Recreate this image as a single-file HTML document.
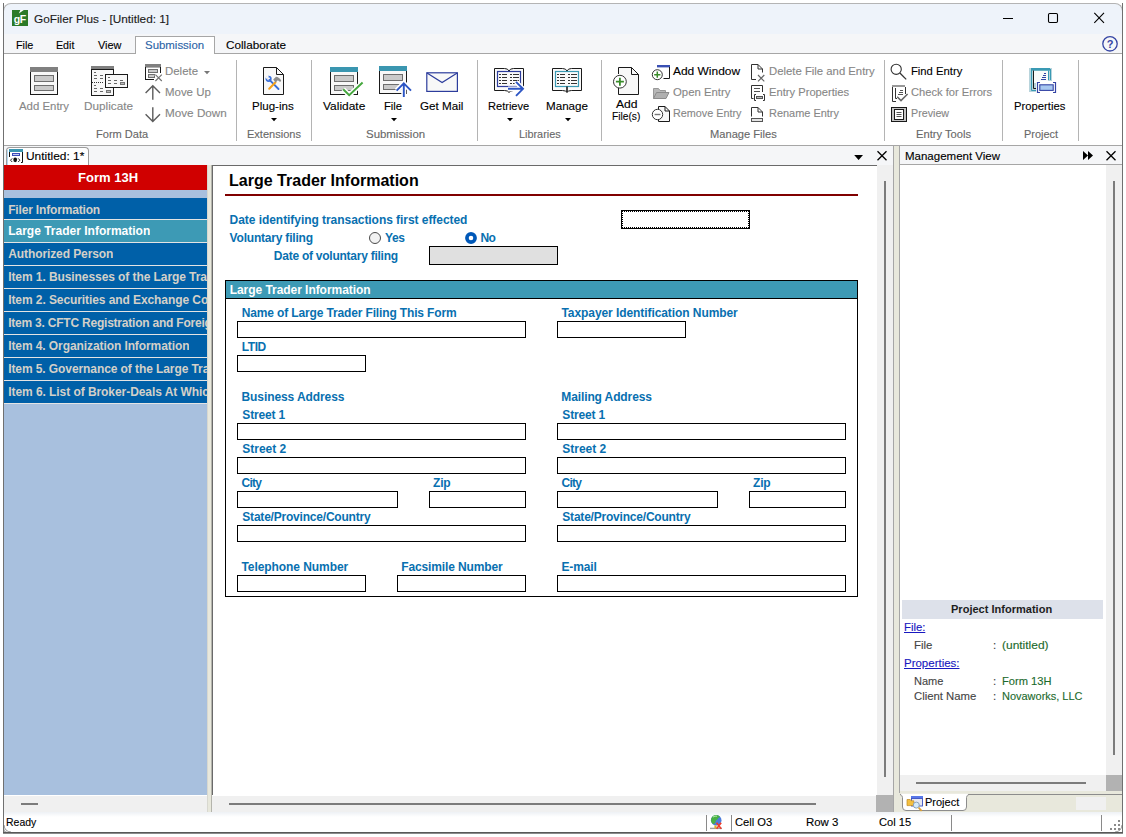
<!DOCTYPE html>
<html lang="en"><head><meta charset="utf-8"><title>GoFiler Plus - [Untitled: 1]</title>
<style>
html,body{margin:0;padding:0;background:#fff;}
body{width:1126px;height:837px;position:relative;overflow:hidden;font-family:"Liberation Sans",sans-serif;font-size:12px;}
body div,body span,body svg{position:absolute;box-sizing:border-box;}
body span{white-space:nowrap;}
</style></head><body>
<div style="left:3px;top:3px;width:1120px;height:31px;background:#eef3fa;border:1px solid #b4b4b4;border-bottom:none;border-radius:8px 8px 0 0;"></div>
<div style="left:4px;top:34px;width:1118px;height:19px;background:#f5f6f8;"></div>
<div style="left:3px;top:3px;width:1px;height:831px;background:#707070;"></div>
<div style="left:1122px;top:3px;width:1px;height:831px;background:#707070;"></div>
<div style="left:3px;top:832px;width:1120px;height:1px;background:#585858;"></div>
<div style="left:3px;top:833px;width:1120px;height:1px;background:#8a8a8a;"></div>
<div style="left:12px;top:10px;width:16px;height:16px;background:#2b7a27;"></div>
<svg style="left:12px;top:10px" width="16" height="16" viewBox="0 0 16 16" ><path d="M8.4,0 L11.8,0 L6.8,3.4 Z" fill="#fff"/></svg>
<span style="left:13.70px;top:13px;font-size:10.5px;line-height:12px;color:#fff;font-weight:bold;letter-spacing:-0.414px;">gF</span>
<span style="left:33.70px;top:13px;font-size:11.5px;line-height:12px;color:#1c1c1c;-webkit-text-stroke:0.12px;transform:scaleX(1.0262);transform-origin:0 0;">GoFiler Plus - [Untitled: 1]</span>
<svg style="left:1000px;top:10px" width="110" height="16" viewBox="0 0 110 16" ><path d="M3,8.5 H13" stroke="#000" stroke-width="1" fill="none"/><rect x="48.5" y="3.5" width="9" height="9" rx="1.2" stroke="#000" stroke-width="1.1" fill="none"/><path d="M94.3,2.8 L104,12.8 M104,2.8 L94.3,12.8" stroke="#000" stroke-width="1.1" fill="none"/></svg>
<div style="left:4px;top:53px;width:1118px;height:1px;background:#a6a6a6;"></div>
<span style="left:15.90px;top:39px;font-size:11.5px;line-height:12px;color:#000;-webkit-text-stroke:0.12px;transform:scaleX(0.9374);transform-origin:0 0;">File</span>
<span style="left:56.00px;top:39px;font-size:11.5px;line-height:12px;color:#000;-webkit-text-stroke:0.12px;transform:scaleX(0.9262);transform-origin:0 0;">Edit</span>
<span style="left:98.20px;top:39px;font-size:11.5px;line-height:12px;color:#000;-webkit-text-stroke:0.12px;transform:scaleX(0.9483);transform-origin:0 0;">View</span>
<div style="left:135px;top:36px;width:80px;height:18px;background:#fff;border:1px solid #a6a6a6;border-bottom:none;"></div>
<span style="left:144.80px;top:39px;font-size:11.5px;line-height:12px;color:#2b63a6;-webkit-text-stroke:0.12px;transform:scaleX(0.9941);transform-origin:0 0;">Submission</span>
<span style="left:225.80px;top:39px;font-size:11.5px;line-height:12px;color:#000;-webkit-text-stroke:0.12px;transform:scaleX(1.0202);transform-origin:0 0;">Collaborate</span>
<svg style="left:1100px;top:34px" width="20" height="20" viewBox="0 0 20 20" ><circle cx="10" cy="9.8" r="7.2" fill="none" stroke="#3444a4" stroke-width="1.3"/></svg>
<span style="left:1106.70px;top:38px;font-size:11px;line-height:12px;color:#3444a4;font-weight:bold;">?</span>
<div style="left:4px;top:145px;width:1118px;height:1px;background:#a6a6a6;"></div>
<div style="left:236px;top:60px;width:1px;height:81px;background:#b4b4b4;"></div>
<div style="left:311px;top:60px;width:1px;height:81px;background:#b4b4b4;"></div>
<div style="left:477px;top:60px;width:1px;height:81px;background:#b4b4b4;"></div>
<div style="left:601px;top:60px;width:1px;height:81px;background:#b4b4b4;"></div>
<div style="left:884px;top:60px;width:1px;height:81px;background:#b4b4b4;"></div>
<div style="left:1002px;top:60px;width:1px;height:81px;background:#b4b4b4;"></div>
<div style="left:1078px;top:60px;width:1px;height:81px;background:#b4b4b4;"></div>
<span style="left:96.20px;top:128px;font-size:11.5px;line-height:12px;color:#686868;-webkit-text-stroke:0.12px;transform:scaleX(0.9614);transform-origin:0 0;">Form Data</span>
<span style="left:247.10px;top:128px;font-size:11.5px;line-height:12px;color:#686868;-webkit-text-stroke:0.12px;transform:scaleX(0.9592);transform-origin:0 0;">Extensions</span>
<span style="left:366.00px;top:128px;font-size:11.5px;line-height:12px;color:#686868;-webkit-text-stroke:0.12px;transform:scaleX(0.9941);transform-origin:0 0;">Submission</span>
<span style="left:519.30px;top:128px;font-size:11.5px;line-height:12px;color:#686868;-webkit-text-stroke:0.12px;transform:scaleX(0.9447);transform-origin:0 0;">Libraries</span>
<span style="left:709.50px;top:128px;font-size:11.5px;line-height:12px;color:#686868;-webkit-text-stroke:0.12px;transform:scaleX(0.9670);transform-origin:0 0;">Manage Files</span>
<span style="left:915.90px;top:128px;font-size:11.5px;line-height:12px;color:#686868;-webkit-text-stroke:0.12px;transform:scaleX(0.9714);transform-origin:0 0;">Entry Tools</span>
<span style="left:1024.10px;top:128px;font-size:11.5px;line-height:12px;color:#686868;-webkit-text-stroke:0.12px;transform:scaleX(0.9482);transform-origin:0 0;">Project</span>
<span style="left:18.70px;top:100px;font-size:11.5px;line-height:12px;color:#878787;-webkit-text-stroke:0.12px;transform:scaleX(0.9912);transform-origin:0 0;">Add Entry</span>
<span style="left:84.10px;top:100px;font-size:11.5px;line-height:12px;color:#878787;-webkit-text-stroke:0.12px;transform:scaleX(1.0221);transform-origin:0 0;">Duplicate</span>
<span style="left:251.90px;top:100px;font-size:11.5px;line-height:12px;color:#000;-webkit-text-stroke:0.12px;transform:scaleX(1.0025);transform-origin:0 0;">Plug-ins</span>
<span style="left:322.50px;top:100px;font-size:11.5px;line-height:12px;color:#000;-webkit-text-stroke:0.12px;transform:scaleX(1.0395);transform-origin:0 0;">Validate</span>
<span style="left:384.00px;top:100px;font-size:11.5px;line-height:12px;color:#000;-webkit-text-stroke:0.12px;transform:scaleX(0.9760);transform-origin:0 0;">File</span>
<span style="left:420.10px;top:100px;font-size:11.5px;line-height:12px;color:#000;-webkit-text-stroke:0.12px;transform:scaleX(1.0151);transform-origin:0 0;">Get Mail</span>
<span style="left:487.90px;top:100px;font-size:11.5px;line-height:12px;color:#000;-webkit-text-stroke:0.12px;transform:scaleX(0.9617);transform-origin:0 0;">Retrieve</span>
<span style="left:546.00px;top:100px;font-size:11.5px;line-height:12px;color:#000;-webkit-text-stroke:0.12px;transform:scaleX(1.0106);transform-origin:0 0;">Manage</span>
<span style="left:1014.10px;top:100px;font-size:11.5px;line-height:12px;color:#000;-webkit-text-stroke:0.12px;transform:scaleX(0.9779);transform-origin:0 0;">Properties</span>
<span style="left:615.50px;top:98px;font-size:11.5px;line-height:12px;color:#000;-webkit-text-stroke:0.12px;transform:scaleX(1.0565);transform-origin:0 0;">Add</span>
<span style="left:611.90px;top:110px;font-size:11.5px;line-height:12px;color:#000;-webkit-text-stroke:0.12px;transform:scaleX(0.8876);transform-origin:0 0;">File(s)</span>
<span style="left:165.20px;top:65px;font-size:11.5px;line-height:12px;color:#878787;-webkit-text-stroke:0.12px;transform:scaleX(0.9925);transform-origin:0 0;">Delete</span>
<span style="left:165.20px;top:86px;font-size:11.5px;line-height:12px;color:#878787;-webkit-text-stroke:0.12px;transform:scaleX(0.9952);transform-origin:0 0;">Move Up</span>
<span style="left:165.20px;top:107px;font-size:11.5px;line-height:12px;color:#878787;-webkit-text-stroke:0.12px;transform:scaleX(1.0179);transform-origin:0 0;">Move Down</span>
<span style="left:672.90px;top:65px;font-size:11.5px;line-height:12px;color:#000;-webkit-text-stroke:0.12px;transform:scaleX(1.0390);transform-origin:0 0;">Add Window</span>
<span style="left:673.10px;top:86px;font-size:11.5px;line-height:12px;color:#878787;-webkit-text-stroke:0.12px;transform:scaleX(0.9877);transform-origin:0 0;">Open Entry</span>
<span style="left:673.10px;top:107px;font-size:11.5px;line-height:12px;color:#878787;-webkit-text-stroke:0.12px;transform:scaleX(0.9397);transform-origin:0 0;">Remove Entry</span>
<span style="left:769.00px;top:65px;font-size:11.5px;line-height:12px;color:#878787;-webkit-text-stroke:0.12px;transform:scaleX(0.9848);transform-origin:0 0;">Delete File and Entry</span>
<span style="left:769.00px;top:86px;font-size:11.5px;line-height:12px;color:#878787;-webkit-text-stroke:0.12px;transform:scaleX(0.9722);transform-origin:0 0;">Entry Properties</span>
<span style="left:769.00px;top:107px;font-size:11.5px;line-height:12px;color:#878787;-webkit-text-stroke:0.12px;transform:scaleX(0.9518);transform-origin:0 0;">Rename Entry</span>
<span style="left:911.20px;top:65px;font-size:11.5px;line-height:12px;color:#000;-webkit-text-stroke:0.12px;transform:scaleX(0.9780);transform-origin:0 0;">Find Entry</span>
<span style="left:911.20px;top:86px;font-size:11.5px;line-height:12px;color:#878787;-webkit-text-stroke:0.12px;transform:scaleX(0.9695);transform-origin:0 0;">Check for Errors</span>
<span style="left:911.20px;top:107px;font-size:11.5px;line-height:12px;color:#878787;-webkit-text-stroke:0.12px;transform:scaleX(0.9304);transform-origin:0 0;">Preview</span>
<svg style="left:270.5px;top:118px" width="6" height="4" viewBox="0 0 6 4" ><path d="M0,0 H6 L3,3.2 Z" fill="#000"/></svg>
<svg style="left:390.5px;top:118px" width="6" height="4" viewBox="0 0 6 4" ><path d="M0,0 H6 L3,3.2 Z" fill="#000"/></svg>
<svg style="left:506.5px;top:118px" width="6" height="4" viewBox="0 0 6 4" ><path d="M0,0 H6 L3,3.2 Z" fill="#000"/></svg>
<svg style="left:564.5px;top:118px" width="6" height="4" viewBox="0 0 6 4" ><path d="M0,0 H6 L3,3.2 Z" fill="#000"/></svg>
<svg style="left:203.5px;top:71px" width="6" height="4" viewBox="0 0 6 4" ><path d="M0,0 H6 L3,3.2 Z" fill="#777"/></svg>
<div style="left:4px;top:146px;width:890px;height:19px;background:#f5f6f8;"></div>
<div style="left:900px;top:146px;width:222px;height:18px;background:#f5f6f8;"></div>
<div style="left:899px;top:164px;width:223px;height:1px;background:#a6a6a6;"></div>
<div style="left:6px;top:147px;width:83px;height:18px;background:#fff;border:1px solid #9c9c9c;border-bottom:none;border-radius:4px 4px 0 0;"></div>
<div style="left:7px;top:150px;width:1px;height:15px;background:#b4d8f0;"></div>
<span style="left:26.10px;top:150px;font-size:11.5px;line-height:12px;color:#000;-webkit-text-stroke:0.12px;transform:scaleX(1.0374);transform-origin:0 0;">Untitled: 1*</span>
<svg style="left:9px;top:149px" width="15" height="14" viewBox="0 0 15 14" ><rect x="0" y="0" width="14" height="3" fill="#3a96b0"/><path d="M0.5,3 V8 M13.5,3 V13.5 H12" stroke="#111" fill="none"/><rect x="3.5" y="4.5" width="7" height="2" fill="#c8d0f4" stroke="#3a4ab8"/><path d="M3.2,9.4 L1.5,11.2 L3.2,13 M9.2,9.4 L10.9,11.2 L9.2,13" stroke="#111" fill="none" stroke-width="0.9"/><ellipse cx="6.2" cy="10.8" rx="1.9" ry="2.4" fill="#111"/></svg>
<svg style="left:852px;top:150px" width="40" height="12" viewBox="0 0 40 12" ><path d="M2.2,5 H11 L6.6,10 Z" fill="#000"/><path d="M25.5,1.3 L34.5,10.3 M34.5,1.3 L25.5,10.3" stroke="#000" stroke-width="1.3" fill="none"/></svg>
<span style="left:905.00px;top:150px;font-size:11.5px;line-height:12px;color:#000;-webkit-text-stroke:0.12px;">Management View</span>
<svg style="left:1080px;top:150px" width="40" height="12" viewBox="0 0 40 12" ><path d="M3,1 L8,5.5 L3,10 Z M8,1 L13,5.5 L8,10 Z" fill="#000"/><path d="M26.5,1.3 L35.5,10.3 M35.5,1.3 L26.5,10.3" stroke="#000" stroke-width="1.3" fill="none"/></svg>
<div style="left:4px;top:165px;width:203px;height:630px;background:#a8c0de;"></div>
<div style="left:4px;top:165px;width:203px;height:25px;background:#d00000;"></div>
<span style="left:78.00px;top:170px;font-size:13.33px;line-height:15px;color:#fff;font-weight:bold;transform:scaleX(0.9778);transform-origin:0 0;">Form 13H</span>
<div style="left:4px;top:198px;width:203px;height:22px;background:#0060a8;border-bottom:1px solid #e4e4e4;"></div>
<span style="left:8.20px;top:203px;font-size:12px;line-height:14px;color:#d4d0c8;font-weight:bold;letter-spacing:-0.171px;max-width:199px;overflow:hidden;">Filer Information</span>
<div style="left:4px;top:220px;width:203px;height:23px;background:#3d9ab5;border-bottom:1px solid #e4e4e4;"></div>
<span style="left:8.20px;top:224px;font-size:12px;line-height:14px;color:#fff;font-weight:bold;max-width:199px;overflow:hidden;">Large Trader Information</span>
<div style="left:4px;top:243px;width:203px;height:23px;background:#0060a8;border-bottom:1px solid #e4e4e4;"></div>
<span style="left:8.20px;top:247px;font-size:12px;line-height:14px;color:#d4d0c8;font-weight:bold;letter-spacing:-0.090px;max-width:199px;overflow:hidden;">Authorized Person</span>
<div style="left:4px;top:266px;width:203px;height:23px;background:#0060a8;border-bottom:1px solid #e4e4e4;"></div>
<span style="left:8.20px;top:270px;font-size:12px;line-height:14px;color:#d4d0c8;font-weight:bold;letter-spacing:-0.077px;max-width:199px;overflow:hidden;">Item 1. Businesses of the Large Trader</span>
<div style="left:4px;top:289px;width:203px;height:23px;background:#0060a8;border-bottom:1px solid #e4e4e4;"></div>
<span style="left:8.20px;top:293px;font-size:12px;line-height:14px;color:#d4d0c8;font-weight:bold;letter-spacing:-0.082px;max-width:199px;overflow:hidden;">Item 2. Securities and Exchange Commission</span>
<div style="left:4px;top:312px;width:203px;height:23px;background:#0060a8;border-bottom:1px solid #e4e4e4;"></div>
<span style="left:8.20px;top:316px;font-size:12px;line-height:14px;color:#d4d0c8;font-weight:bold;letter-spacing:-0.220px;max-width:199px;overflow:hidden;">Item 3. CFTC Registration and Foreign</span>
<div style="left:4px;top:335px;width:203px;height:23px;background:#0060a8;border-bottom:1px solid #e4e4e4;"></div>
<span style="left:8.20px;top:339px;font-size:12px;line-height:14px;color:#d4d0c8;font-weight:bold;letter-spacing:-0.087px;max-width:199px;overflow:hidden;">Item 4. Organization Information</span>
<div style="left:4px;top:358px;width:203px;height:23px;background:#0060a8;border-bottom:1px solid #e4e4e4;"></div>
<span style="left:8.20px;top:362px;font-size:12px;line-height:14px;color:#d4d0c8;font-weight:bold;letter-spacing:-0.085px;max-width:199px;overflow:hidden;">Item 5. Governance of the Large Trader</span>
<div style="left:4px;top:381px;width:203px;height:23px;background:#0060a8;border-bottom:1px solid #e4e4e4;"></div>
<span style="left:8.20px;top:385px;font-size:12px;line-height:14px;color:#d4d0c8;font-weight:bold;letter-spacing:-0.061px;max-width:199px;overflow:hidden;">Item 6. List of Broker-Deals At Which</span>
<div style="left:207px;top:165px;width:5px;height:647px;background:#e8e8dc;"></div>
<div style="left:207px;top:165px;width:1px;height:647px;background:#d8d8d0;"></div>
<div style="left:211px;top:165px;width:1px;height:647px;background:#b4b4ac;"></div>
<div style="left:212px;top:165px;width:1px;height:630px;background:#6a6a6a;"></div>
<div style="left:212px;top:165px;width:665px;height:1px;background:#6a6a6a;"></div>
<div style="left:4px;top:795px;width:203px;height:1px;background:#fff;"></div>
<div style="left:4px;top:796px;width:203px;height:16px;background:#f0f0f0;"></div>
<div style="left:21px;top:803px;width:17px;height:2px;background:#7c7c7c;"></div>
<div style="left:212px;top:796px;width:664px;height:16px;background:#f0f0f0;"></div>
<div style="left:229px;top:803px;width:587px;height:2px;background:#7c7c7c;"></div>
<div style="left:876px;top:795px;width:18px;height:17px;background:#b2b2b2;"></div>
<div style="left:877px;top:165px;width:17px;height:630px;background:#f0f0f0;"></div>
<div style="left:884px;top:181px;width:2px;height:596px;background:#7c7c7c;"></div>
<div style="left:893px;top:146px;width:1px;height:666px;background:#a6a6a6;"></div>
<div style="left:894px;top:146px;width:5px;height:666px;background:#e8e8dc;"></div>
<div style="left:899px;top:146px;width:1px;height:647px;background:#a6a6a6;"></div>
<span style="left:229.00px;top:172px;font-size:16px;line-height:17px;color:#000;font-weight:bold;letter-spacing:0.013px;">Large Trader Information</span>
<div style="left:225px;top:194px;width:633px;height:2px;background:#800000;"></div>
<span style="left:229.60px;top:213px;font-size:12px;line-height:14px;color:#0870b0;font-weight:bold;letter-spacing:-0.052px;">Date identifying transactions first effected</span>
<span style="left:229.60px;top:231px;font-size:12px;line-height:14px;color:#0870b0;font-weight:bold;letter-spacing:-0.201px;">Voluntary filing</span>
<span style="left:273.80px;top:249px;font-size:12px;line-height:14px;color:#0870b0;font-weight:bold;letter-spacing:-0.247px;">Date of voluntary filing</span>
<span style="left:384.90px;top:231px;font-size:12px;line-height:14px;color:#0870b0;font-weight:bold;letter-spacing:-0.308px;">Yes</span>
<span style="left:480.40px;top:231px;font-size:12px;line-height:14px;color:#0870b0;font-weight:bold;letter-spacing:-0.566px;">No</span>
<svg style="left:368px;top:231px" width="14" height="14" viewBox="0 0 14 14" ><circle cx="7" cy="7" r="5.5" fill="#f2f2f2" stroke="#4a4a4a" stroke-width="1"/></svg>
<svg style="left:464px;top:231px" width="14" height="14" viewBox="0 0 14 14" ><circle cx="7" cy="7" r="4.1" fill="#fff" stroke="#0058b8" stroke-width="3.6"/></svg>
<div style="left:621px;top:210px;width:129px;height:19px;border:1px solid #000;background:#fff;"><div style="left:0;top:0;width:127px;height:17px;border:1px dotted #000;"></div></div>
<div style="left:429px;top:246px;width:129px;height:19px;border:1px solid #000;background:#e0e0e0;"></div>
<div style="left:225px;top:280px;width:633px;height:317px;border:1px solid #000;background:#fff;"><div style="left:0;top:0;width:631px;height:18px;background:#3d9ab5;border-bottom:1px solid #000;"></div></div>
<span style="left:229.70px;top:283px;font-size:12px;line-height:14px;color:#fff;font-weight:bold;letter-spacing:-0.048px;">Large Trader Information</span>
<span style="left:241.80px;top:306px;font-size:12px;line-height:14px;color:#0870b0;font-weight:bold;letter-spacing:-0.144px;">Name of Large Trader Filing This Form</span>
<div style="left:237px;top:321px;width:289px;height:17px;border:1px solid #000;background:#fff;"></div>
<span style="left:561.50px;top:306px;font-size:12px;line-height:14px;color:#0870b0;font-weight:bold;letter-spacing:-0.076px;">Taxpayer Identification Number</span>
<div style="left:557px;top:321px;width:129px;height:17px;border:1px solid #000;background:#fff;"></div>
<span style="left:241.80px;top:340px;font-size:12px;line-height:14px;color:#0870b0;font-weight:bold;letter-spacing:-0.468px;">LTID</span>
<div style="left:237px;top:355px;width:129px;height:17px;border:1px solid #000;background:#fff;"></div>
<span style="left:241.50px;top:390px;font-size:12px;line-height:14px;color:#0870b0;font-weight:bold;letter-spacing:-0.089px;">Business Address</span>
<span style="left:561.30px;top:390px;font-size:12px;line-height:14px;color:#0870b0;font-weight:bold;letter-spacing:-0.115px;">Mailing Address</span>
<span style="left:242.30px;top:408px;font-size:12px;line-height:14px;color:#0870b0;font-weight:bold;letter-spacing:-0.150px;">Street 1</span>
<div style="left:237px;top:423px;width:289px;height:17px;border:1px solid #000;background:#fff;"></div>
<span style="left:242.30px;top:442px;font-size:12px;line-height:14px;color:#0870b0;font-weight:bold;letter-spacing:-0.021px;">Street 2</span>
<div style="left:237px;top:457px;width:289px;height:17px;border:1px solid #000;background:#fff;"></div>
<span style="left:241.50px;top:476px;font-size:12px;line-height:14px;color:#0870b0;font-weight:bold;letter-spacing:-0.732px;">City</span>
<div style="left:237px;top:491px;width:161px;height:17px;border:1px solid #000;background:#fff;"></div>
<span style="left:433.00px;top:476px;font-size:12px;line-height:14px;color:#0870b0;font-weight:bold;letter-spacing:-0.182px;">Zip</span>
<div style="left:429px;top:491px;width:97px;height:17px;border:1px solid #000;background:#fff;"></div>
<span style="left:242.30px;top:510px;font-size:12px;line-height:14px;color:#0870b0;font-weight:bold;letter-spacing:-0.206px;">State/Province/Country</span>
<div style="left:237px;top:525px;width:289px;height:17px;border:1px solid #000;background:#fff;"></div>
<span style="left:562.30px;top:408px;font-size:12px;line-height:14px;color:#0870b0;font-weight:bold;letter-spacing:-0.150px;">Street 1</span>
<div style="left:557px;top:423px;width:289px;height:17px;border:1px solid #000;background:#fff;"></div>
<span style="left:562.30px;top:442px;font-size:12px;line-height:14px;color:#0870b0;font-weight:bold;letter-spacing:-0.021px;">Street 2</span>
<div style="left:557px;top:457px;width:289px;height:17px;border:1px solid #000;background:#fff;"></div>
<span style="left:561.50px;top:476px;font-size:12px;line-height:14px;color:#0870b0;font-weight:bold;letter-spacing:-0.732px;">City</span>
<div style="left:557px;top:491px;width:161px;height:17px;border:1px solid #000;background:#fff;"></div>
<span style="left:753.00px;top:476px;font-size:12px;line-height:14px;color:#0870b0;font-weight:bold;letter-spacing:-0.182px;">Zip</span>
<div style="left:749px;top:491px;width:97px;height:17px;border:1px solid #000;background:#fff;"></div>
<span style="left:562.30px;top:510px;font-size:12px;line-height:14px;color:#0870b0;font-weight:bold;letter-spacing:-0.206px;">State/Province/Country</span>
<div style="left:557px;top:525px;width:289px;height:17px;border:1px solid #000;background:#fff;"></div>
<span style="left:241.40px;top:560px;font-size:12px;line-height:14px;color:#0870b0;font-weight:bold;letter-spacing:-0.061px;">Telephone Number</span>
<div style="left:237px;top:575px;width:129px;height:17px;border:1px solid #000;background:#fff;"></div>
<span style="left:401.30px;top:560px;font-size:12px;line-height:14px;color:#0870b0;font-weight:bold;letter-spacing:-0.133px;">Facsimile Number</span>
<div style="left:397px;top:575px;width:129px;height:17px;border:1px solid #000;background:#fff;"></div>
<span style="left:561.50px;top:560px;font-size:12px;line-height:14px;color:#0870b0;font-weight:bold;letter-spacing:-0.136px;">E-mail</span>
<div style="left:557px;top:575px;width:289px;height:17px;border:1px solid #000;background:#fff;"></div>
<div style="left:900px;top:165px;width:206px;height:610px;background:#fff;"></div>
<div style="left:1106px;top:165px;width:16px;height:610px;background:#f0f0f0;"></div>
<div style="left:1113px;top:181px;width:2px;height:574px;background:#7c7c7c;"></div>
<div style="left:900px;top:775px;width:206px;height:16px;background:#f0f0f0;"></div>
<div style="left:1106px;top:775px;width:16px;height:16px;background:#b2b2b2;"></div>
<div style="left:916px;top:782px;width:170px;height:2px;background:#7c7c7c;"></div>
<div style="left:899px;top:791px;width:223px;height:21px;background:#e8e8dc;"></div>
<div style="left:899px;top:791px;width:1px;height:2px;background:#a6a6a6;"></div>
<div style="left:900px;top:794px;width:222px;height:1px;background:#8c8c8c;"></div>
<svg style="left:898px;top:793px" width="74" height="19" viewBox="0 0 74 19" ><path d="M2,1.5 Q4.2,1.8 4.5,4.5 V14 Q4.5,17.5 8,17.5 H65 Q68.5,17.5 68.5,14 V4.5 Q68.8,1.8 71,1.5" fill="#fff" stroke="#8c8c8c" stroke-width="1"/><rect x="3.2" y="0.8" width="66.6" height="1.4" fill="#fff"/></svg>
<span style="left:925.00px;top:796px;font-size:11.5px;line-height:12px;color:#000;-webkit-text-stroke:0.12px;transform:scaleX(0.9564);transform-origin:0 0;">Project</span>
<div style="left:1076px;top:797px;width:30px;height:13px;background:#f0f0f0;"></div>
<div style="left:902px;top:600px;width:201px;height:19px;background:#dde1ea;"></div>
<span style="left:950.90px;top:603px;font-size:11.5px;line-height:12px;color:#1e1e1e;font-weight:bold;transform:scaleX(0.9592);transform-origin:0 0;">Project Information</span>
<span style="left:903.70px;top:621px;font-size:11.5px;line-height:12px;color:#1818c0;-webkit-text-stroke:0.12px;transform:scaleX(0.9800);transform-origin:0 0;text-decoration:underline;">File:</span>
<span style="left:913.50px;top:639px;font-size:11.5px;line-height:12px;color:#454545;-webkit-text-stroke:0.12px;transform:scaleX(0.9926);transform-origin:0 0;">File</span>
<span style="left:993.00px;top:639px;font-size:11.5px;line-height:12px;color:#454545;-webkit-text-stroke:0.12px;">:</span>
<span style="left:1001.80px;top:639px;font-size:11.5px;line-height:12px;color:#1c6a2c;-webkit-text-stroke:0.12px;transform:scaleX(1.0398);transform-origin:0 0;">(untitled)</span>
<span style="left:903.70px;top:657px;font-size:11.5px;line-height:12px;color:#1818c0;-webkit-text-stroke:0.12px;transform:scaleX(0.9980);transform-origin:0 0;text-decoration:underline;">Properties:</span>
<span style="left:913.50px;top:675px;font-size:11.5px;line-height:12px;color:#454545;-webkit-text-stroke:0.12px;transform:scaleX(0.9577);transform-origin:0 0;">Name</span>
<span style="left:993.00px;top:675px;font-size:11.5px;line-height:12px;color:#454545;-webkit-text-stroke:0.12px;">:</span>
<span style="left:1001.80px;top:675px;font-size:11.5px;line-height:12px;color:#1c6a2c;-webkit-text-stroke:0.12px;transform:scaleX(0.9682);transform-origin:0 0;">Form 13H</span>
<span style="left:913.50px;top:690px;font-size:11.5px;line-height:12px;color:#454545;-webkit-text-stroke:0.12px;transform:scaleX(0.9845);transform-origin:0 0;">Client Name</span>
<span style="left:993.00px;top:690px;font-size:11.5px;line-height:12px;color:#454545;-webkit-text-stroke:0.12px;">:</span>
<span style="left:1001.80px;top:690px;font-size:11.5px;line-height:12px;color:#1c6a2c;-webkit-text-stroke:0.12px;transform:scaleX(0.9541);transform-origin:0 0;">Novaworks, LLC</span>
<div style="left:4px;top:812px;width:1118px;height:20px;background:linear-gradient(#eef1f5,#fff 5px);"></div>
<span style="left:6.30px;top:816px;font-size:11.5px;line-height:12px;color:#000;-webkit-text-stroke:0.12px;transform:scaleX(0.9107);transform-origin:0 0;">Ready</span>
<span style="left:734.80px;top:816px;font-size:11.5px;line-height:12px;color:#000;-webkit-text-stroke:0.12px;transform:scaleX(0.9723);transform-origin:0 0;">Cell O3</span>
<span style="left:805.80px;top:816px;font-size:11.5px;line-height:12px;color:#000;-webkit-text-stroke:0.12px;transform:scaleX(0.9938);transform-origin:0 0;">Row 3</span>
<span style="left:879.00px;top:816px;font-size:11.5px;line-height:12px;color:#000;-webkit-text-stroke:0.12px;transform:scaleX(0.9681);transform-origin:0 0;">Col 15</span>
<div style="left:706px;top:815px;width:1px;height:16px;background:#8a8a8a;"></div>
<div style="left:731px;top:815px;width:1px;height:16px;background:#8a8a8a;"></div>
<div style="left:951px;top:815px;width:1px;height:16px;background:#8a8a8a;"></div>
<div style="left:1101px;top:815px;width:1px;height:16px;background:#8a8a8a;"></div>
<svg style="left:1108px;top:818px" width="13" height="13" viewBox="0 0 13 13" ><rect x="10" y="2" width="2" height="2" fill="#8a8a8a"/><rect x="6" y="6" width="2" height="2" fill="#8a8a8a"/><rect x="10" y="6" width="2" height="2" fill="#8a8a8a"/><rect x="2" y="10" width="2" height="2" fill="#8a8a8a"/><rect x="6" y="10" width="2" height="2" fill="#8a8a8a"/><rect x="10" y="10" width="2" height="2" fill="#8a8a8a"/></svg>
<svg style="left:30px;top:67px" width="28" height="29" viewBox="0 0 28 29" ><g shape-rendering="crispEdges"><rect x="0" y="0" width="28" height="5" fill="#808080"/><rect x="0" y="5" width="28" height="23" fill="#f8f8f8"/><path d="M0.5,5 V27.5 H27.5 V5" fill="none" stroke="#1a1a1a"/><rect x="4.5" y="8.5" width="19" height="6" fill="#cacaca" stroke="#6e6e6e"/><rect x="4.5" y="18.5" width="19" height="5" fill="#cacaca" stroke="#6e6e6e"/></g></svg>
<svg style="left:91px;top:66px" width="37" height="30" viewBox="0 0 37 30" ><g shape-rendering="crispEdges"><rect x="0" y="0" width="23" height="4" fill="#808080"/><rect x="0.5" y="3.5" width="22" height="26" fill="#f8f8f8" stroke="#1a1a1a"/><rect x="3" y="6" width="2" height="1" fill="#666"/><rect x="3" y="9" width="3" height="1" fill="#666"/><rect x="9" y="9" width="3" height="1" fill="#666"/><rect x="3" y="12" width="3" height="1" fill="#666"/><rect x="9" y="12" width="3" height="1" fill="#666"/><rect x="1" y="16" width="1" height="1" fill="#333"/><rect x="3" y="16" width="1" height="1" fill="#333"/><rect x="5" y="16" width="1" height="1" fill="#333"/><rect x="7" y="16" width="1" height="1" fill="#333"/><rect x="9" y="16" width="1" height="1" fill="#333"/><rect x="11" y="16" width="1" height="1" fill="#333"/><rect x="3" y="19" width="2" height="1" fill="#666"/><rect x="3" y="22" width="3" height="1" fill="#666"/><rect x="9" y="22" width="3" height="1" fill="#666"/><rect x="3" y="25" width="3" height="1" fill="#666"/><rect x="9" y="25" width="3" height="1" fill="#666"/><rect x="15.5" y="24.5" width="4" height="2" fill="#bbb" stroke="#777"/><rect x="14.5" y="8.5" width="22" height="13" fill="#f8f8f8" stroke="#1a1a1a"/><rect x="17" y="11" width="2" height="1" fill="#666"/><rect x="17" y="14" width="3" height="1" fill="#666"/><rect x="23" y="14" width="3" height="1" fill="#666"/><rect x="17" y="17" width="3" height="1" fill="#666"/><rect x="23" y="17" width="3" height="1" fill="#666"/><rect x="29" y="14" width="3" height="1" fill="#666"/><rect x="29.5" y="16.5" width="4" height="2" fill="#bbb" stroke="#777"/></g></svg>
<svg style="left:145px;top:64px" width="18" height="18" viewBox="0 0 18 18" ><g shape-rendering="crispEdges"><rect x="0" y="0" width="16" height="3" fill="#808080"/><rect x="0" y="3" width="16" height="1" fill="#b0b0b0"/><path d="M0.5,3 V15.5 H9 M15.5,3 V9" stroke="#1a1a1a" fill="none"/><rect x="3.5" y="5.5" width="9" height="3" fill="#cacaca" stroke="#707070"/><rect x="3.5" y="10.5" width="6" height="3" fill="#cacaca" stroke="#707070"/></g><path d="M10.4,10.6 L16.8,17 M16.8,10.6 L10.4,17" stroke="#fff" stroke-width="2.6" fill="none"/><path d="M10.4,10.6 L16.8,17 M16.8,10.6 L10.4,17" stroke="#707070" stroke-width="1.1" fill="none"/></svg>
<svg style="left:144px;top:84px" width="18" height="17" viewBox="0 0 18 17" ><path d="M8.8,1.8 V15.8 M1.6,9 L8.8,1.8 L16,9" stroke="#5c5c5c" stroke-width="1.4" fill="none"/></svg>
<svg style="left:144px;top:106px" width="18" height="17" viewBox="0 0 18 17" ><path d="M8.8,1.2 V15.4 M1.6,8.2 L8.8,15.4 L16,8.2" stroke="#5c5c5c" stroke-width="1.4" fill="none"/></svg>
<svg style="left:263px;top:67px" width="22" height="29" viewBox="0 0 22 29" ><path d="M0.5,0.5 H13.5 L20.5,7.5 V27.5 H0.5 Z" fill="#f8f8f8" stroke="#1a1a1a"/><path d="M13.5,0.5 V7.5 H20.5" fill="none" stroke="#1a1a1a"/><path d="M6.5,12.8 L15.5,22" stroke="#3a6fd8" stroke-width="1.9" stroke-linecap="round"/><circle cx="5.6" cy="11.8" r="2.3" fill="none" stroke="#3a6fd8" stroke-width="1.6"/><rect x="2.5" y="9" width="3" height="2.2" fill="#f8f8f8" transform="rotate(-45 4 10)"/><path d="M6.2,21.8 L12.5,15.2" stroke="#f5a21c" stroke-width="2" stroke-linecap="round"/><path d="M10.2,12.6 L13,9.8 Q15.5,9.6 18.2,13.5 L17.2,15 L14.8,13.2 L12.6,15.4 Z" fill="#8c8c8c"/></svg>
<svg style="left:330px;top:67px" width="34" height="31" viewBox="0 0 34 31" ><g shape-rendering="crispEdges"><rect x="0" y="0" width="28" height="5" fill="#3a96b0"/><rect x="0" y="5" width="28" height="23" fill="#f8f8f8"/><path d="M0.5,5 V27.5 H27.5 V5" fill="none" stroke="#1a1a1a"/><rect x="4.5" y="8.5" width="19" height="6" fill="#cacaca" stroke="#6e6e6e"/><rect x="4.5" y="18.5" width="19" height="5" fill="#cacaca" stroke="#6e6e6e"/></g><path d="M13.2,22.2 L19.2,28.2 L32.6,15.6" stroke="#fff" stroke-width="5" fill="none"/><path d="M13.2,22.2 L19.2,28.2 L32.6,15.6" stroke="#46a83e" stroke-width="2" fill="none"/></svg>
<svg style="left:379px;top:66px" width="34" height="32" viewBox="0 0 34 32" ><g shape-rendering="crispEdges"><rect x="0" y="0" width="28" height="5" fill="#3a96b0"/><rect x="0" y="5" width="28" height="23" fill="#f8f8f8"/><path d="M0.5,5 V27.5 H27.5 V5" fill="none" stroke="#1a1a1a"/><rect x="4.5" y="8.5" width="19" height="6" fill="#cacaca" stroke="#6e6e6e"/><rect x="4.5" y="18.5" width="19" height="5" fill="#cacaca" stroke="#6e6e6e"/></g><path d="M24.8,31 V17.6 M17.6,24.6 L24.8,17.4 L32,24.6" stroke="#fff" stroke-width="5" fill="none"/><path d="M24.8,31 V17.6 M17.6,24.6 L24.8,17.4 L32,24.6" stroke="#2c55c4" stroke-width="1.9" fill="none"/></svg>
<svg style="left:426px;top:72px" width="33" height="21" viewBox="0 0 33 21" ><rect x="0.8" y="0.8" width="30.6" height="18.6" fill="#f8f8f8" stroke="#2c3c9c" stroke-width="1.2"/><path d="M1,1 L16.1,10.6 L31.2,1" fill="none" stroke="#2c3c9c" stroke-width="1.2"/></svg>
<svg style="left:494px;top:67px" width="31" height="31" viewBox="0 0 31 31" ><path d="M0.5,1.5 H10.5 Q14,1.5 15,4 Q16,1.5 19.5,1.5 H29.5 V23.5 H19.5 Q16,23.5 15,25.5 Q14,23.5 10.5,23.5 H0.5 Z" fill="#fafafa" stroke="#1a1a1a" stroke-width="1"/><rect x="3.5" y="4.5" width="23" height="15" fill="none" stroke="#2c3c9c" stroke-width="1.2"/><rect x="5" y="7" width="2" height="1" fill="#333"/><rect x="8" y="7" width="5" height="1" fill="#333"/><rect x="16" y="7" width="2" height="1" fill="#333"/><rect x="19" y="7" width="6" height="1" fill="#333"/><rect x="5" y="10" width="2" height="1" fill="#333"/><rect x="8" y="10" width="5" height="1" fill="#333"/><rect x="16" y="10" width="2" height="1" fill="#333"/><rect x="19" y="10" width="6" height="1" fill="#333"/><rect x="5" y="13" width="2" height="1" fill="#333"/><rect x="8" y="13" width="5" height="1" fill="#333"/><rect x="16" y="13" width="2" height="1" fill="#333"/><rect x="19" y="13" width="6" height="1" fill="#333"/><rect x="5" y="16" width="2" height="1" fill="#333"/><rect x="8" y="16" width="5" height="1" fill="#333"/><rect x="16" y="16" width="2" height="1" fill="#333"/><rect x="19" y="16" width="6" height="1" fill="#333"/><path d="M14,21.8 H28.4 M22,14.8 L29,21.8 L22,28.8" stroke="#fff" stroke-width="4.6" fill="none"/><path d="M14,21.8 H28.4 M22,14.8 L29,21.8 L22,28.8" stroke="#2c55c4" stroke-width="1.9" fill="none"/></svg>
<svg style="left:552px;top:67px" width="31" height="31" viewBox="0 0 31 31" ><path d="M0.5,1.5 H10.5 Q14,1.5 15,4 Q16,1.5 19.5,1.5 H29.5 V23.5 H19.5 Q16,23.5 15,25.5 Q14,23.5 10.5,23.5 H0.5 Z" fill="#fafafa" stroke="#1a1a1a" stroke-width="1"/><rect x="3.5" y="4.5" width="23" height="15" fill="none" stroke="#3a9ab4" stroke-width="1.2"/><rect x="5" y="7" width="2" height="1" fill="#333"/><rect x="8" y="7" width="5" height="1" fill="#333"/><rect x="16" y="7" width="2" height="1" fill="#333"/><rect x="19" y="7" width="6" height="1" fill="#333"/><rect x="5" y="10" width="2" height="1" fill="#333"/><rect x="8" y="10" width="5" height="1" fill="#333"/><rect x="16" y="10" width="2" height="1" fill="#333"/><rect x="19" y="10" width="6" height="1" fill="#333"/><rect x="5" y="13" width="2" height="1" fill="#333"/><rect x="8" y="13" width="5" height="1" fill="#333"/><rect x="16" y="13" width="2" height="1" fill="#333"/><rect x="19" y="13" width="6" height="1" fill="#333"/><rect x="5" y="16" width="2" height="1" fill="#333"/><rect x="8" y="16" width="5" height="1" fill="#333"/><rect x="16" y="16" width="2" height="1" fill="#333"/><rect x="19" y="16" width="6" height="1" fill="#333"/><path d="M15,19.5 V25" stroke="#1a1a1a" stroke-width="1.6"/></svg>
<svg style="left:612px;top:66px" width="28" height="30" viewBox="0 0 28 30" ><path d="M6.5,8 V1.5 H19.5 L26.5,8.5 V28.5 H6.5 V21.5" fill="#f8f8f8" stroke="#1a1a1a"/><path d="M19.5,1.5 V8.5 H26.5" fill="none" stroke="#1a1a1a"/><circle cx="7.9" cy="15.7" r="6.4" fill="#fff" stroke="#333" stroke-width="1"/><path d="M7.9,11.7 V19.7 M3.9,15.7 H11.9" stroke="#3a8c2a" stroke-width="1.8"/></svg>
<svg style="left:651px;top:64px" width="20" height="17" viewBox="0 0 20 17" ><rect x="6" y="1" width="13" height="2.4" fill="#3a50b4"/><path d="M18.5,3 V14.5 H12.5" fill="none" stroke="#1a1a1a"/><circle cx="6.3" cy="10.7" r="5" fill="#fff" stroke="#333" stroke-width="1"/><path d="M6.3,7.6 V13.8 M3.2,10.7 H9.4" stroke="#3a8c2a" stroke-width="1.5"/></svg>
<svg style="left:652px;top:87px" width="18" height="13" viewBox="0 0 18 13" ><path d="M1.5,11.5 V1.5 H6.5 L8,3.5 H13.5 V5.5" fill="#b8b8b8" stroke="#999"/><path d="M1.5,11.5 L4.5,5.5 H17 L14,11.5 Z" fill="#b0b0b0" stroke="#8c8c8c"/></svg>
<svg style="left:651px;top:105px" width="20" height="18" viewBox="0 0 20 18" ><path d="M7.5,4 V1.5 H14 L18.5,6 V16.5 H7.5 V15" fill="#f8f8f8" stroke="#1a1a1a"/><path d="M14,1.5 V6 H18.5" fill="none" stroke="#1a1a1a"/><circle cx="6.5" cy="9.5" r="5.2" fill="#fff" stroke="#333" stroke-width="1"/><path d="M3.6,9.5 H9.4" stroke="#777" stroke-width="1.4"/></svg>
<svg style="left:750px;top:63px" width="16" height="19" viewBox="0 0 16 19" ><path d="M6,16.5 H1.5 V1.5 H8 L12.5,6 V9.5" fill="none" stroke="#333"/><path d="M8,1.5 V6 H12.5" fill="none" stroke="#333"/><path d="M8,12 L14.3,18.3 M14.3,12 L8,18.3" stroke="#666" stroke-width="1.2" fill="none"/></svg>
<svg style="left:750px;top:84px" width="16" height="18" viewBox="0 0 16 18" ><path d="M3.5,14.5 H1.5 V1.5 H12.5 V8" fill="none" stroke="#333"/><path d="M4,4.5 H10 M4,7.5 H10" stroke="#555" stroke-width="1"/><path d="M6,10.5 H4.5 V16.5 H6 M13,10.5 H14.5 V16.5 H13" fill="none" stroke="#333"/><rect x="6.5" y="12.5" width="6" height="2" fill="#bbb" stroke="#555"/></svg>
<svg style="left:750px;top:106px" width="15" height="18" viewBox="0 0 15 18" ><path d="M1.5,10.5 V1.5 H8 L12.5,6 V10.5" fill="none" stroke="#333"/><path d="M8,1.5 V6 H12.5" fill="none" stroke="#333"/><rect x="1.5" y="12.5" width="11" height="3" fill="#e4e4e4" stroke="#555"/></svg>
<svg style="left:889px;top:62px" width="19" height="19" viewBox="0 0 19 19" ><circle cx="7.2" cy="7.3" r="5.1" fill="none" stroke="#333" stroke-width="1.1"/><path d="M10.9,11 L17.2,17.4" stroke="#333" stroke-width="1.3"/></svg>
<svg style="left:891px;top:84px" width="18" height="19" viewBox="0 0 18 19" ><rect x="1" y="1" width="13" height="2" fill="#999"/><path d="M1.5,3 V17.5 H5 M4.5,4 V14.5 H6 M14.5,3 V10" fill="none" stroke="#333"/><path d="M9,6.5 H12 M8,8.5 H12 M7,10.5 H12" stroke="#555" stroke-width="1"/><path d="M6.2,12.8 L10,16.6 L16.6,10" stroke="#666" stroke-width="1.5" fill="none"/></svg>
<svg style="left:891px;top:107px" width="17" height="16" viewBox="0 0 17 16" ><rect x="0.5" y="0.5" width="15" height="14" fill="#c4c4c4" stroke="#1a1a1a"/><rect x="3.5" y="2.5" width="9" height="10" fill="#fff" stroke="#1a1a1a"/><path d="M5.5,5.5 H10.5 M5.5,7.5 H10.5 M5.5,9.5 H10.5" stroke="#555" stroke-width="1"/></svg>
<svg style="left:1029px;top:68px" width="28" height="26" viewBox="0 0 28 26" ><rect x="0" y="0" width="23" height="24" fill="#b8d4dc"/><rect x="2" y="0" width="19" height="2.6" fill="#3a9ab4"/><path d="M4.5,2.5 V20.5 H7" fill="none" stroke="#1a1a1a"/><path d="M2.5,1 V22.5 H7" fill="none" stroke="#3a9ab4"/><rect x="5" y="3" width="14" height="12" fill="#fafafa"/><path d="M19.5,2.5 V12 M21.5,1 V12" fill="none" stroke="#3a9ab4"/><path d="M15,5.5 H17 M14,7.5 H17 M13,9.5 H17 M12,11.5 H17" stroke="#3444a4" stroke-width="1"/><rect x="7" y="13" width="21" height="13" fill="#fff"/><path d="M11,14.5 H8.5 V24.5 H11 M24,14.5 H26.5 V24.5 H24" fill="none" stroke="#3444a4" stroke-width="1.2"/><rect x="10.8" y="16.8" width="13.4" height="5.6" fill="#a8c8f0" stroke="#3444a4" stroke-width="1.1"/></svg>
<svg style="left:906px;top:795px" width="19" height="17" viewBox="0 0 19 17" ><rect x="5" y="1" width="12" height="2.6" fill="#5878e8"/><rect x="5.5" y="3.5" width="11" height="7.5" fill="#e6e8f2" stroke="#3a50c0" stroke-width="0.9"/><path d="M1,4.5 H4.2 L5.2,5.8 H7.8 V10.6 H1 Z" fill="#f4c040" stroke="#c08a1c" stroke-width="0.7"/><circle cx="10.3" cy="10.1" r="3" fill="#d4eaf8" stroke="#8aa0b8" stroke-width="1"/><path d="M12.6,12.6 L15.6,15.8" stroke="#e0a030" stroke-width="1.7"/></svg>
<svg style="left:709px;top:814px" width="15" height="16" viewBox="0 0 15 16" ><circle cx="7.2" cy="6.3" r="5.3" fill="#4c7cdc"/><path d="M2,6.5 Q2,2.2 6.2,1.1 Q9.4,0.6 11.2,3 Q9,3.4 8.4,5.4 Q6.2,6 6.6,8.2 Q5.4,10.6 3.6,9.8 Q2,8.6 2,6.5 Z" fill="#48b044"/><path d="M4,3 Q6,1.6 8,2.2" stroke="#b8f0a8" stroke-width="1" fill="none"/><rect x="1" y="13.7" width="12" height="1.4" fill="#9c9c9c"/><rect x="5.4" y="11.4" width="2.2" height="3" fill="#e0b030"/><path d="M7.6,8.8 L12.2,14.8 M12.2,8.8 L7.6,14.8" stroke="#f03a28" stroke-width="1.5"/></svg>
<svg style="left:4px;top:824px" width="8" height="8" viewBox="0 0 8 8" ><path d="M0,1 Q0.5,7.5 7,8" fill="none" stroke="#9a9a9a" stroke-width="1"/><path d="M0,3 Q0,8 5,8 L0,8 Z" fill="#b0b0b0"/></svg>
<svg style="left:1114px;top:824px" width="8" height="8" viewBox="0 0 8 8" ><path d="M8,1 Q7.5,7.5 1,8" fill="none" stroke="#9a9a9a" stroke-width="1"/></svg>
</body></html>
